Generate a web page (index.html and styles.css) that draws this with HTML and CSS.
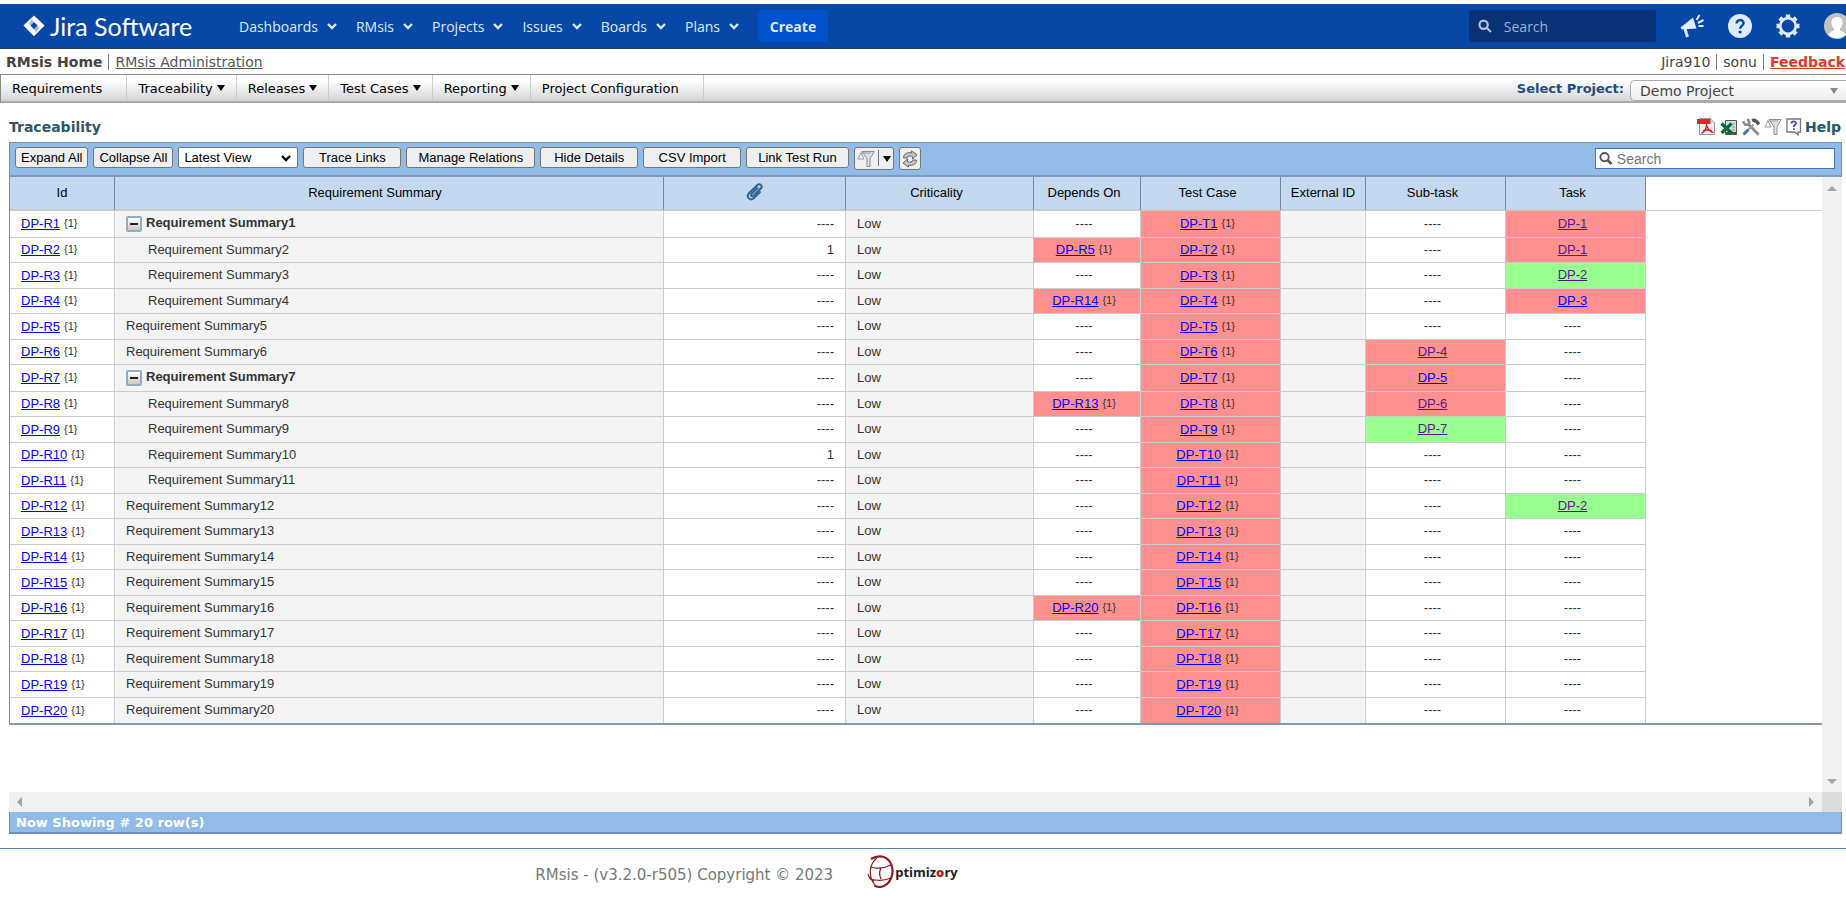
FILE: index.html
```html
<!DOCTYPE html>
<html lang="en">
<head>
    <meta charset="UTF-8">
    <title>RMsis - Traceability</title>
    <link rel="stylesheet" href="styles.css">
</head>
<body>
    <header class="jira-header">
        <a class="logo" href="#">
            <svg width="22" height="22" viewBox="0 0 22 22">
                <path fill="#fff" fill-rule="evenodd" d="M11 .4 21.6 10.5 11 21.2.4 10.5zM11 7 7.4 10.6 11 14.2l3.6-3.6z"/>
                <path fill="#7aa0e0" d="M11 .4c-2.400 2.200-2 4.600 0 6.600L7.400 10.600 5.800 9z" opacity=".7"/>
                <path fill="#7aa0e0" d="M11 21.200c2.400-2.300 2-4.800 0-7l3.600-3.600 1.800 1.800z" opacity=".7"/>
            </svg>
            <span>Jira Software</span>
        </a>
        <nav class="jira-nav">
            <a href="#">Dashboards <svg class="chev" viewBox="0 0 10 8"><path d="M1 2 5 6 9 2"/></svg></a>
            <a href="#">RMsis <svg class="chev" viewBox="0 0 10 8"><path d="M1 2 5 6 9 2"/></svg></a>
            <a href="#">Projects <svg class="chev" viewBox="0 0 10 8"><path d="M1 2 5 6 9 2"/></svg></a>
            <a href="#">Issues <svg class="chev" viewBox="0 0 10 8"><path d="M1 2 5 6 9 2"/></svg></a>
            <a href="#">Boards <svg class="chev" viewBox="0 0 10 8"><path d="M1 2 5 6 9 2"/></svg></a>
            <a href="#">Plans <svg class="chev" viewBox="0 0 10 8"><path d="M1 2 5 6 9 2"/></svg></a>
        </nav>
        <button type="button" class="create-btn">Create</button>
        <div class="jira-tools">
            <label class="jira-search">
                <svg width="16" height="16" viewBox="0 0 16 16" fill="none" stroke="#b5c2da" stroke-width="2.500"><circle cx="6.500" cy="6.500" r="4.800"/><path d="m10 10 5 5"/></svg>
                <input type="text" placeholder="Search" aria-label="Search Jira">
            </label>
            <a href="#" aria-label="Feedback"><svg width="24" height="24" viewBox="0 0 24 24"><path fill="#deebff" d="M.5 13.500 13 3.500l3.500 11-14.500 1z"/><path fill="none" stroke="#deebff" stroke-width="3" d="m5 15 2.500 8"/><path fill="none" stroke="#deebff" stroke-width="2" d="m16.500 6 3-5M18 9l5.500-3M18.500 12h5"/></svg></a>
            <a href="#" aria-label="Help"><svg width="24" height="24" viewBox="0 0 24 24"><circle cx="12" cy="12" r="12" fill="#deebff"/><path fill="none" stroke="#0747a6" stroke-width="2.400" d="M8.600 9.500c0-4.600 7-4.400 7-.4 0 2.700-3.500 2.800-3.500 5.600"/><circle cx="12.100" cy="18" r="1.600" fill="#0747a6"/></svg></a>
            <a href="#" aria-label="Administration"><svg width="24" height="24" viewBox="0 0 24 24" fill="none" stroke="#deebff"><circle cx="12" cy="12" r="7.800" stroke-width="2.800"/><path stroke-width="4.400" d="M12 .5v3M12 20.500v3M.5 12h3M20.500 12h3M3.900 3.900 6 6M18 18l2.100 2.100M3.900 20.100 6 18M18 6l2.100-2.100"/></svg></a>
            <a class="avatar" href="#" aria-label="Profile"><svg width="26" height="26" viewBox="0 0 26 26"><circle cx="13" cy="13" r="13" fill="#c1c1c1"/><path fill="#fff" d="M13 4c4 0 6 3 5.500 6.500-.4 2.600-1.500 4-2.500 5v2c3 1 5 2 5.500 4.500a13 13 0 0 1-17 0C5 19.500 7 18.500 10 17.500v-2c-1-1-2.100-2.400-2.500-5C7 7 9 4 13 4z"/></svg></a>
        </div>
    </header>

    <div class="user-bar">
        <div class="links">
            <strong>RMsis Home</strong>
            <a href="#">RMsis Administration</a>
        </div>
        <div class="links">
            <span>Jira910</span>
            <span>sonu</span>
            <a class="feedback" href="#">Feedback</a>
        </div>
    </div>

    <nav class="menu">
        <a class="wide" href="#">Requirements</a>
        <a href="#">Traceability <i class="arrow"></i></a>
        <a href="#">Releases <i class="arrow"></i></a>
        <a href="#">Test Cases <i class="arrow"></i></a>
        <a href="#">Reporting <i class="arrow"></i></a>
        <a class="wide" href="#">Project Configuration</a>
        <div class="project">
            <label for="project">Select Project:</label>
            <div class="project-select">
                <select id="project"><option>Demo Project</option></select>
                <i class="arrow"></i>
            </div>
        </div>
    </nav>

    <main class="content">
        <div class="title-row">
            <h1>Traceability</h1>
            <div class="exports">
                <a href="#" aria-label="Export PDF"><svg width="19" height="19" viewBox="0 0 19 19"><path fill="#ececec" stroke="#999" d="M2.500 1.500h11l4 4v12h-15z"/><path fill="#c9c9c9" d="M13.500 1.500v4h4z"/><path fill="#e0252c" d="M0 2h13.500v5H0z"/><path fill="none" stroke="#d8232a" stroke-width="1.400" d="M9.500 7c.5 4-1.500 7-5 9.500M10 9c1 3 3 6 6.500 6.500M6 14c3-1.300 6-1.300 9 0"/></svg></a>
                <a href="#" aria-label="Export Excel"><svg width="18" height="18" viewBox="0 0 18 18"><path fill="#d5dbd7" stroke="#4b5a52" d="M5.500 2.500h11v14h-11z"/><path stroke="#8d9892" d="M12 6h3M12 9h3M12 12h3"/><path fill="#46554c" d="M6 14h10v2H6z"/><path fill="none" stroke="#0b6b30" stroke-width="3.200" d="m1.500 5.500 10 9.500M11.500 5.500l-10 9.500"/></svg></a>
                <a href="#" aria-label="Settings"><svg width="18" height="18" viewBox="0 0 18 18" fill="none"><path stroke="#8a8a8a" stroke-width="2.800" d="m6 6 10.500 10.500"/><path stroke="#888" stroke-width="2.500" d="M1.500 3c0 3 2 4.500 4.500 3.500S7.500 2.500 5 1.500"/><path stroke="#4f6f9c" stroke-width="3" d="m1.500 16.500 5-5"/><path stroke="#999" stroke-width="2" d="m6.500 11.500 5-5"/><path stroke="#555" stroke-width="3.400" d="M10 2.500c3-1 5 1 7 4"/></svg></a>
                <a href="#" aria-label="Filter"><svg width="18" height="18" viewBox="0 0 18 18"><path fill="#dfe0e8" stroke="#8a8d9c" d="M5 1.500h12.300L13 8.500v8h-3v-8z"/><path fill="none" stroke="#9a9caa" d="M1 9l3-6.500L7 9zM4.500 3H14"/></svg></a>
                <a class="help" href="#"><svg width="16" height="18" viewBox="0 0 16 18"><path fill="#fff" stroke="#777" stroke-width="1.300" d="M1 1h13.500v13H12v3l-3-3H1z"/><path fill="none" stroke="#5146b8" stroke-width="1.800" d="M5.500 5.500c0-3 4.500-2.800 4.500-.3C10 7 7.800 7 7.800 9"/><path fill="#5146b8" d="M7 10.300h1.800v1.800H7z"/></svg>Help</a>
            </div>
        </div>

        <section class="grid">
            <div class="toolbar">
                <button type="button" class="tight">Expand All</button>
                <button type="button" class="tight">Collapse All</button>
                <div class="view">
                    <select aria-label="View"><option>Latest View</option></select>
                    <svg class="chev" viewBox="0 0 10 8"><path d="M1 2 5 6 9 2"/></svg>
                </div>
                <button type="button">Trace Links</button>
                <button type="button">Manage Relations</button>
                <button type="button">Hide Details</button>
                <button type="button">CSV Import</button>
                <button type="button">Link Test Run</button>
                <button type="button" class="icon-btn split" aria-label="Filter"><svg width="18" height="18" viewBox="0 0 18 18"><path fill="#dfe0e8" stroke="#8a8d9c" d="M5 1.500h12.300L13 8.500v8h-3v-8z"/><path fill="none" stroke="#9a9caa" d="M1 9l3-6.500L7 9zM4.500 3H14"/></svg><i class="arrow"></i></button>
                <button type="button" class="icon-btn" aria-label="Refresh"><svg width="16" height="18" viewBox="0 0 16 18" fill="#c4c4c4" stroke="#666" stroke-linejoin="round"><path d="M1.500 8C1.500 3.500 6 1.800 9.500 3V1L15 4.800 10.500 9V6.500C8 5.300 5.500 6 5 8z"/><path d="M14.500 10c0 4.500-4.500 6.200-8 5v2L1 13.200 5.500 9v2.500c2.500 1.200 5 .5 5.500-1.500z"/></svg></button>
                <label class="grid-search">
                    <svg width="15" height="15" viewBox="0 0 15 15" fill="none" stroke="#555" stroke-width="2"><circle cx="6" cy="6" r="4.500"/><path stroke-width="3" d="m9 9 4.500 4.500"/></svg>
                    <input type="text" placeholder="Search" aria-label="Search requirements">
                </label>
            </div>

            <div class="viewport">
                <div class="table-wrap">
                    <table>
                        <colgroup>
                            <col class="c-id"><col class="c-summary"><col class="c-files"><col class="c-crit"><col class="c-depends">
                            <col class="c-link"><col class="c-ext"><col class="c-link"><col class="c-link"><col>
                        </colgroup>
                        <thead>
                            <tr>
                                <th>Id</th>
                                <th class="sortable">Requirement Summary</th>
                                <th><svg width="18" height="18" viewBox="0 0 18 18" fill="none" stroke="#2f6390" stroke-width="2" stroke-linecap="round" role="img" aria-label="Attachments"><path d="M11.500 5 5.500 11c-1.200 1.500.5 3 2 1.800l7.500-7.500c2-2.500-1.200-5.300-3.600-3.300L3 10.200c-3.400 3.800 1.300 8.300 5 4.900l6-6"/></svg></th>
                                <th class="linked">Criticality</th>
                                <th class="linked">Depends On</th>
                                <th class="linked">Test Case</th>
                                <th>External ID</th>
                                <th class="linked">Sub-task</th>
                                <th class="linked">Task</th>
                                <td class="rest"></td>
                            </tr>
                        </thead>
                        <tbody id="rows"></tbody>
                    </table>
                </div>
                <div class="vscroll"><i class="up"></i><i class="down"></i></div>
                <div class="hscroll"><i class="left"></i><i class="right"></i></div>
                <div class="corner"></div>
            </div>

            <div class="status">Now Showing # 20 row(s)</div>
        </section>
    </main>

    <footer class="footer">
        <span>RMsis - (v3.2.0-r505) Copyright © 2023</span>
        <a class="optimizory" href="#">
            <svg width="28" height="34" viewBox="0 0 28 34" fill="none" stroke="#8c1c20"><path stroke-width="2.200" d="M4 4C12-1 21 1 24.500 10c3 9-1 19-9 21.500-3 .8-6 .5-8-.8"/><path stroke-width="1.200" d="M10 3C2 9 1 22 8 30M1 19c1 4 3 6 6 7M4 12c6 2 14 1 20-2M3 24c7 2 14 2 21-1M14 13c-2 4-2 7 0 11"/></svg>
            <span>ptimiz<b>o</b>ry</span>
        </a>
    </footer>

    <script src="script.js"></script>
</body>
</html>
```
FILE: styles.css
```css
* {
    box-sizing: border-box;
}

body {
    margin: 0;
    padding-top: 4px;
    height: 100vh;
    display: flex;
    flex-direction: column;
    overflow: hidden;
    background: #fff;
    font-family: Verdana, "DejaVu Sans", sans-serif;
    font-size: 14px;
    color: #333;
}

button, input, select {
    font: inherit;
    color: inherit;
}

/* Jira header */

.jira-header {
    display: flex;
    align-items: center;
    flex: none;
    height: 45px;
    padding-left: 23px;
    background: #0747a6;
    border-bottom: 1px solid #2e3d54;
    font-family: "Open Sans", sans-serif;
    color: #deebff;
}

.logo {
    display: flex;
    align-items: center;
    gap: 5px;
    width: 216px;
    font-family: Lato, sans-serif;
    font-size: 25px;
    color: #fff;
    text-decoration: none;
    white-space: nowrap;
}

.jira-nav {
    display: flex;
    gap: 19px;
}

.jira-nav a {
    display: flex;
    align-items: center;
    gap: 9px;
    color: #deebff;
    text-decoration: none;
}

.chev {
    width: 10px;
    height: 8px;
    fill: none;
    stroke: currentColor;
    stroke-width: 2.4;
}

.create-btn {
    width: 70px;
    height: 32px;
    margin-left: 19px;
    border: 0;
    border-radius: 3px;
    background: #0052cc;
    font-weight: bold;
}

.jira-tools {
    display: flex;
    align-items: center;
    gap: 24px;
    margin-left: auto;
    overflow: hidden;
}

.jira-tools a {
    display: flex;
}

.jira-tools .avatar {
    margin-right: -4px;
}

.jira-search {
    display: flex;
    align-items: center;
    gap: 10px;
    width: 187px;
    height: 32px;
    padding-left: 9px;
    border-radius: 3px;
    background: #083176;
}

.jira-search input {
    width: 100%;
    border: 0;
    background: none;
}

.jira-search input::placeholder {
    color: #a3b3cf;
}

/* User bar and menu */

.user-bar {
    display: flex;
    justify-content: space-between;
    align-items: center;
    flex: none;
    height: 25px;
    padding: 0 1px 0 6px;
    color: #444;
}

.links {
    display: flex;
}

.links > * + * {
    margin-left: 6px;
    padding-left: 6px;
    border-left: 1px solid #777;
}

.links a {
    color: #555;
}

.links .feedback {
    color: #dd3b2d;
    font-weight: bold;
}

.menu {
    display: flex;
    flex: none;
    height: 29px;
    border: 1px solid #888;
    border-bottom: 2px solid #aaa;
    border-right: 0;
    background: linear-gradient(#fff 20%, #d4d5d7);
    font-size: 13px;
}

.menu > a {
    display: flex;
    align-items: center;
    gap: 4px;
    padding: 0 11px;
    border-right: 1px solid #ccc;
    color: #000;
    text-decoration: none;
}

.menu > a.wide {
    padding-right: 24px;
}

.arrow {
    border: 4px solid transparent;
    border-top: 6px solid #000;
    border-bottom: 0;
}

.project {
    display: flex;
    align-items: center;
    gap: 6px;
    margin-left: auto;
    color: #244a85;
    font-weight: bold;
}

.project-select {
    display: flex;
    align-items: center;
    width: 216px;
    height: 21px;
    margin-top: 5px;
    padding-right: 8px;
    border: 1px solid #aaa;
    border-right: 0;
    border-radius: 5px 0 0 5px;
    background: linear-gradient(#fff, #eee);
    font-size: 14px;
    font-weight: normal;
    color: #444;
}

.project-select select {
    flex: 1;
    appearance: none;
    padding: 0 0 0 9px;
    border: 0;
    background: none;
}

.project-select .arrow {
    border-top-color: #888;
}

/* Page content */

.content {
    display: flex;
    flex-direction: column;
    flex: 1;
    min-height: 0;
    padding: 0 4px 14px 9px;
}

.title-row {
    display: flex;
    justify-content: space-between;
    align-items: center;
    flex: none;
    height: 39px;
    padding: 8px 1px 0 0;
}

h1 {
    margin: 0;
    font-size: 14px;
    color: #2f5767;
}

.exports {
    display: flex;
    align-items: center;
    gap: 4px;
}

.exports a {
    display: flex;
    align-items: center;
    gap: 3px;
    color: #215868;
    font-weight: bold;
    text-decoration: none;
}

.grid {
    display: flex;
    flex-direction: column;
    flex: 1;
    min-height: 0;
    font-family: Arial, "Liberation Sans", sans-serif;
    font-size: 13px;
}

.toolbar {
    display: flex;
    align-items: flex-start;
    gap: 5px;
    flex: none;
    height: 35px;
    padding: 4px 6px 0 5px;
    border: 1px solid #6f8fb5;
    border-bottom: 2px solid #7f9cc0;
    background: #92bbe7;
    color: #000;
}

.toolbar button {
    min-width: 98px;
    height: 21px;
    padding: 0 11px 1px;
    border: 1px solid #767676;
    border-radius: 3px;
    background: #efefef;
    white-space: nowrap;
}

.toolbar .tight {
    min-width: 0;
    padding: 0 5px 1px;
}

.toolbar .icon-btn {
    display: flex;
    align-items: center;
    min-width: 0;
    height: 23px;
    padding: 0 2px;
}

.toolbar .split {
    gap: 8px;
    background: linear-gradient(#777, #777) 23px 2px / 1px 16px no-repeat #efefef;
}

.view {
    display: flex;
    align-items: center;
    width: 120px;
    height: 21px;
    padding-right: 6px;
    border: 1px solid #767676;
    border-radius: 2px;
    background: #fff;
}

.view select {
    flex: 1;
    appearance: none;
    padding: 0 5px 1px;
    border: 0;
    background: none;
}

.grid-search {
    display: flex;
    align-items: center;
    gap: 4px;
    width: 240px;
    height: 21px;
    margin: 1px 0 0 auto;
    padding-left: 3px;
    border: 1px solid #3c76bd;
    background: #fff;
}

.grid-search input {
    width: 100%;
    padding: 0;
    border: 0;
    outline: 0;
    font-size: 14px;
}

.grid-search input::placeholder {
    color: #757575;
}

.viewport {
    display: grid;
    grid-template-columns: 1fr 20px;
    grid-template-rows: 1fr 20px;
    flex: 1;
    min-height: 0;
}

.table-wrap {
    overflow: hidden;
    min-height: 0;
}

table {
    width: 100%;
    table-layout: fixed;
    border-collapse: separate;
    border-spacing: 0;
    border-left: 1px solid #6f8fb5;
    border-bottom: 2px solid #8398a8;
}

.c-id { width: 105px; }
.c-summary { width: 549px; }
.c-files { width: 182px; }
.c-crit { width: 188px; }
.c-depends { width: 107px; }
.c-link { width: 140px; }
.c-ext { width: 85px; }

th {
    height: 34px;
    padding: 0 0 2px;
    border-right: 1px solid #71899f;
    border-bottom: 2px solid #ccc;
    background: #c4d8ef;
    color: #000;
    font-weight: normal;
}

th.sortable {
    padding-right: 28px;
}

th.linked {
    padding-right: 6px;
}

th svg {
    display: block;
    margin: 0 auto;
}

.rest {
    padding: 0;
    border-bottom: 1px solid #ccc;
}

tbody td {
    padding: 0 14px 1px 8px;
    border-right: 1px solid #ccc;
    border-bottom: 1px solid #ccc;
    text-align: center;
    line-height: 16px;
}

tbody tr {
    height: 26px;
}

tbody tr:nth-child(even) {
    height: 25px;
}

tbody tr.parent {
    height: 27px;
}

tbody .rest {
    border: 0;
}

tbody tr:last-child td {
    border-bottom: 0;
}

tbody .id, tbody .summary, tbody .crit {
    padding-left: 11px;
    text-align: left;
}

tbody .files {
    padding-right: 11px;
    text-align: right;
}

.summary, .crit, .ext {
    background: #f4f4f4;
}

tbody .summary.child {
    padding-left: 33px;
}

.parent .summary {
    font-weight: bold;
}

.toggle {
    display: inline-block;
    width: 16px;
    height: 16px;
    margin-right: 4px;
    padding: 0;
    border: 2px solid #8fabc6;
    border-radius: 2px;
    background: linear-gradient(#222, #222) center / 8px 2px no-repeat, linear-gradient(#fff, #cfc9c0);
    vertical-align: middle;
}

td a {
    color: #00f;
}

td a.seen {
    color: #551a8b;
}

td small {
    margin-left: 4px;
    font-size: 11px;
    vertical-align: 1px;
}

.bad {
    background: #ff9090;
}

.good {
    background: #99ff90;
}

.vscroll, .hscroll {
    display: flex;
    justify-content: space-between;
    align-items: center;
    background: #f0f0f0;
}

.vscroll {
    flex-direction: column;
    padding: 9px 0 8px;
}

.hscroll {
    padding: 0 8px;
}

.corner {
    background: #dcdcdc;
}

.up, .down {
    border: 5px solid transparent;
}

.left, .right {
    border: 5px solid transparent;
}

.up {
    border-top: 0;
    border-bottom-color: #a3a3a3;
}

.down {
    border-bottom: 0;
    border-top-color: #a3a3a3;
}

.left {
    border-left: 0;
    border-right-color: #a3a3a3;
}

.right {
    border-right: 0;
    border-left-color: #a3a3a3;
}

.status {
    flex: none;
    height: 22px;
    padding-left: 6px;
    border: 1px solid #6f8fb5;
    border-top: 0;
    border-bottom-width: 2px;
    background: #92bbe7;
    font: bold 13px/21px Verdana, "DejaVu Sans", sans-serif;
    color: #fff;
}

/* Footer */

.footer {
    display: flex;
    align-items: flex-start;
    gap: 34px;
    flex: none;
    height: 52px;
    padding: 6px 0 0 29%;
    border-top: 1px solid #5a80bd;
    font-size: 15px;
    color: #777;
}

.footer > span {
    line-height: 40px;
}

.optimizory {
    display: flex;
    align-items: center;
    font: bold 13px "Open Sans", sans-serif;
    color: #222;
    text-decoration: none;
}

.optimizory b {
    color: #b01c20;
}
```
FILE: script.js
```js
// one entry per requirement, empty fields are drawn as dashes
const requirements = [
    { level: 'parent', task: ['DP-1', 'bad', 'seen'] },
    { level: 'child', files: 1, depends: 'DP-R5', task: ['DP-1', 'bad', 'seen'] },
    { level: 'child', task: ['DP-2', 'good', 'seen'] },
    { level: 'child', depends: 'DP-R14', task: ['DP-3', 'bad', ''] },
    {},
    { subtask: ['DP-4', 'bad', 'seen'] },
    { level: 'parent', subtask: ['DP-5', 'bad', ''] },
    { level: 'child', depends: 'DP-R13', subtask: ['DP-6', 'bad', 'seen'] },
    { level: 'child', subtask: ['DP-7', 'good', 'seen'] },
    { level: 'child', files: 1 },
    { level: 'child' },
    { task: ['DP-2', 'good', 'seen'] },
    {}, {}, {},
    { depends: 'DP-R20' },
    {}, {}, {}, {}
];

function versioned(key) {
    return `<a href="#">${key}</a><small>{1}</small>`;
}

function issueCell(issue) {
    if (!issue) {
        return '<td>----</td>';
    }
    const [key, state, seen] = issue;
    return `<td class="${state}"><a class="${seen}" href="#">${key}</a></td>`;
}

document.getElementById('rows').innerHTML = requirements.map((req, i) => {
    const n = i + 1;
    const level = req.level || '';
    const toggle = level === 'parent' ? '<button type="button" class="toggle" aria-label="Collapse"></button>' : '';

    return `<tr class="${level === 'parent' ? 'parent' : ''}">
        <td class="id">${versioned('DP-R' + n)}</td>
        <td class="summary ${level === 'child' ? 'child' : ''}">${toggle}Requirement Summary${n}</td>
        <td class="files">${req.files || '----'}</td>
        <td class="crit">Low</td>
        ${req.depends ? `<td class="bad">${versioned(req.depends)}</td>` : '<td>----</td>'}
        <td class="bad">${versioned('DP-T' + n)}</td>
        <td class="ext"></td>
        ${issueCell(req.subtask)}
        ${issueCell(req.task)}
        <td class="rest"></td>
    </tr>`;
}).join('');
```
